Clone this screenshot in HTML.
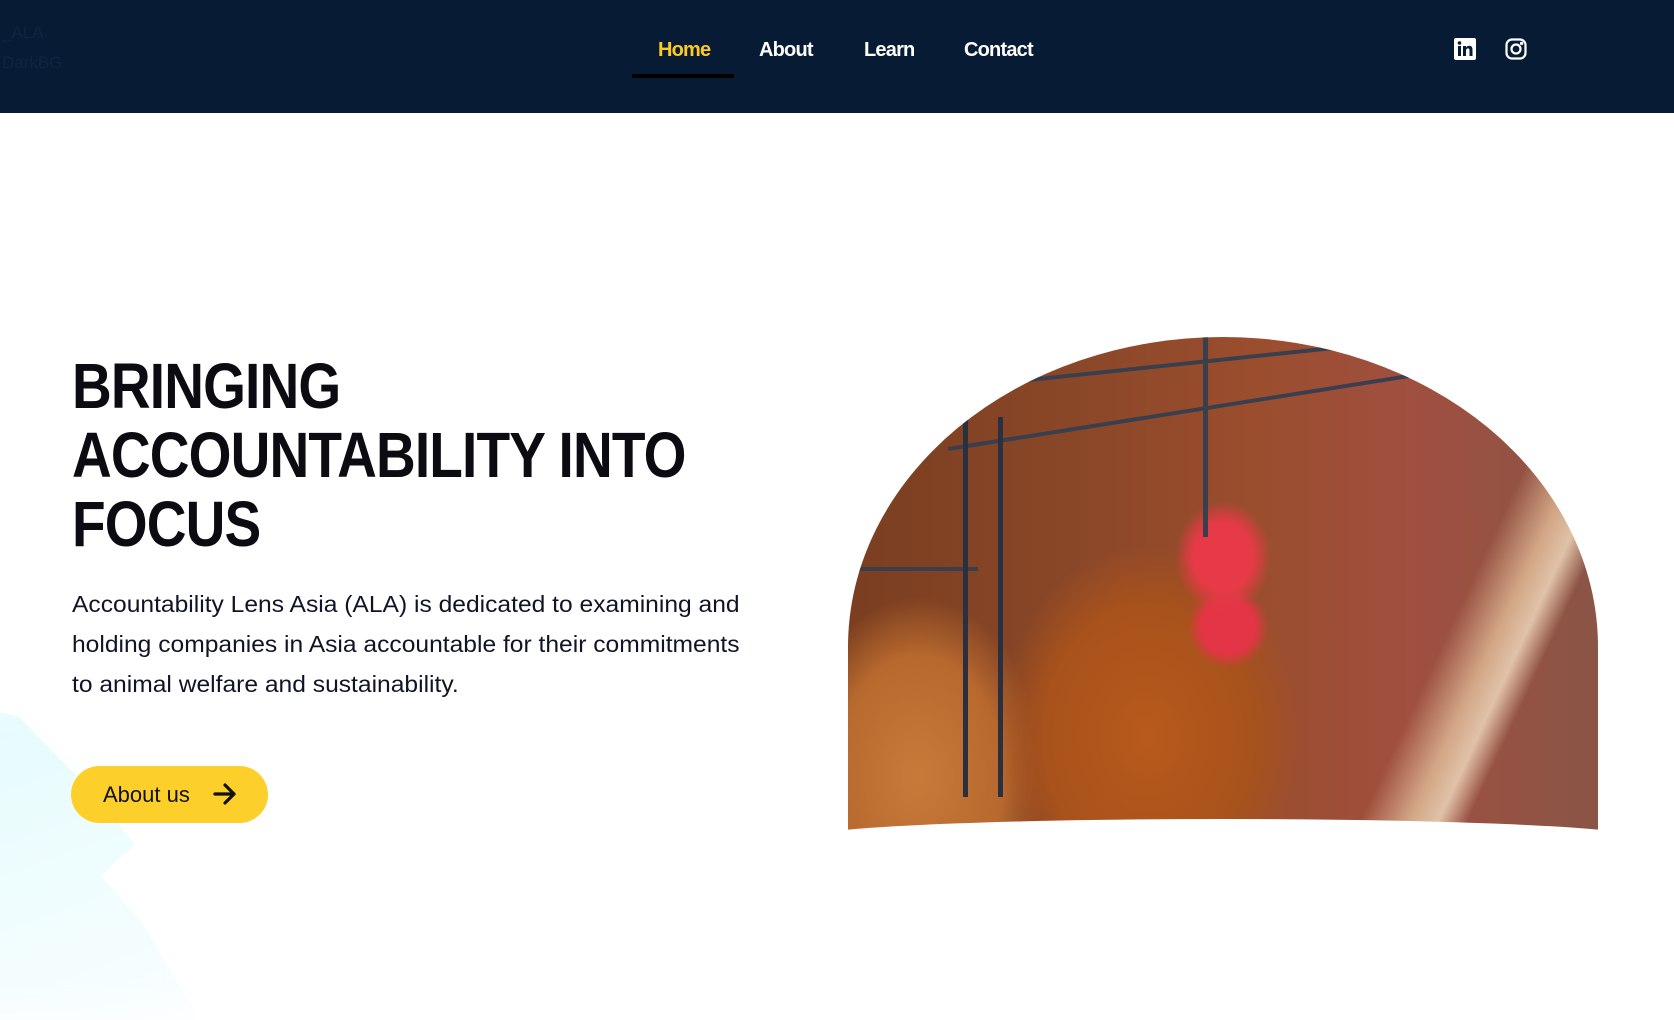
<!DOCTYPE html>
<html><head><meta charset="utf-8">
<style>
html,body{margin:0;padding:0;}
body{width:1674px;height:985px;position:relative;overflow:hidden;background:#fff;font-family:"Liberation Sans",sans-serif;}
.nav{position:absolute;left:0;top:0;width:1674px;height:113px;background:#081b35;}
.logo{position:absolute;left:2px;top:18px;color:#0e2442;font-size:17px;line-height:30px;}
.nav a{position:absolute;top:39px;font-weight:bold;font-size:20px;color:#fff;text-decoration:none;letter-spacing:-0.8px;}
.ul{position:absolute;left:632px;top:74px;width:102px;height:4px;background:#000;}
.blob{position:absolute;left:-60px;top:700px;width:260px;height:320px;background:linear-gradient(160deg,#e0fbfd 0%,#eefdfe 60%,#fafeff 100%);filter:blur(14px);opacity:.85;clip-path:polygon(0 0,30% 5%,60% 30%,75% 45%,62% 55%,78% 70%,100% 100%,0 100%);}
h1{position:absolute;left:72px;top:352px;margin:0;font-size:64px;line-height:69px;font-weight:bold;color:#0b0b12;transform:scaleX(0.86);transform-origin:left top;white-space:nowrap;letter-spacing:-1px;}
p{position:absolute;left:72px;top:584px;margin:0;font-size:23px;line-height:40px;color:#101426;white-space:nowrap;transform:scaleX(1.07);transform-origin:left top;}
.btn{position:absolute;left:71px;top:766px;width:197px;height:57px;border-radius:29px;background:#fdcf2a;}
.btn span{position:absolute;left:32px;top:16px;font-size:22px;color:#111;}
.btn svg{position:absolute;left:142px;top:17px;}
.img{position:absolute;left:848px;top:337px;width:750px;height:500px;border-radius:50% 50% 0 0 / 62% 62% 0 0;overflow:hidden;
background:
radial-gradient(ellipse 60px 70px at 375px 220px,#e63a46 0,#e63a46 50%,transparent 80%),
radial-gradient(ellipse 45px 45px at 380px 290px,#e33545 0,#e33545 60%,transparent 90%),
radial-gradient(ellipse 190px 240px at 300px 400px,#b85a1c 0,#a8521c 55%,transparent 80%),
radial-gradient(ellipse 140px 200px at 70px 440px,#c77a3a 0,#b8692e 60%,transparent 90%),
linear-gradient(115deg,transparent 75%,#d2a584 80%,#e0c2a8 83%,transparent 86%),
linear-gradient(90deg,#7a3e20 0%,#8a4728 30%,#9b4e2e 55%,#a04f40 75%,#8a5546 100%);}
.img .cage{position:absolute;left:115px;top:80px;width:30px;height:380px;border-left:5px solid #2a3040;border-right:5px solid #2a3040;}
.img .bar{position:absolute;left:0;width:750px;height:4px;background:#3a3f4d;transform-origin:left;}
.img .bot{position:absolute;left:-50px;top:482px;width:850px;height:120px;background:#fff;border-radius:50% 50% 0 0/ 20px 20px 0 0;}
</style></head><body>
<div class="nav">
<div class="logo">_ALA<br>DarkBG</div>
<a style="left:658px;color:#fdc927">Home</a>
<a style="left:759px">About</a>
<a style="left:864px">Learn</a>
<a style="left:964px">Contact</a>
<div class="ul"></div>
<svg style="position:absolute;left:1454px;top:38px" width="22" height="22" viewBox="0 0 22 22"><rect width="22" height="22" rx="2" fill="#fff"/><rect x="4" y="8" width="3" height="10" fill="#081b35"/><circle cx="5.5" cy="5" r="1.8" fill="#081b35"/><path d="M9 8h3v1.5c.8-1.2 2-1.8 3.3-1.8 2.3 0 3.2 1.5 3.2 4V18h-3v-5.6c0-1.3-.4-2-1.5-2s-2 .8-2 2.2V18H9z" fill="#081b35"/></svg>
<svg style="position:absolute;left:1505px;top:38px" width="22" height="22" viewBox="0 0 22 22" fill="none" stroke="#fff" stroke-width="2.2"><rect x="1.5" y="1.5" width="19" height="19" rx="5.5"/><circle cx="11" cy="11" r="4.5"/><circle cx="16.6" cy="5.4" r=".6" fill="#fff"/></svg>
</div>
<div class="blob"></div>
<h1>BRINGING<br>ACCOUNTABILITY INTO<br>FOCUS</h1>
<p>Accountability Lens Asia (ALA) is dedicated to examining and<br>holding companies in Asia accountable for their commitments<br>to animal welfare and sustainability.</p>
<div class="btn"><span>About us</span><svg width="24" height="22" viewBox="0 0 24 22" fill="none" stroke="#111" stroke-width="3.2" stroke-linecap="round" stroke-linejoin="round"><path d="M2 11h19M12 2l9 9-9 9"/></svg></div>
<div class="img">
<div class="bar" style="top:60px;transform:rotate(-6deg)"></div>
<div class="bar" style="top:110px;transform:rotate(-9deg);left:100px"></div>
<div class="bar" style="top:230px;left:0;width:130px"></div>
<div class="cage"></div>
<div class="bar" style="top:0;left:355px;width:5px;height:200px;background:#3a3f4d"></div>
<div class="bot"></div>
</div>
</body></html>
